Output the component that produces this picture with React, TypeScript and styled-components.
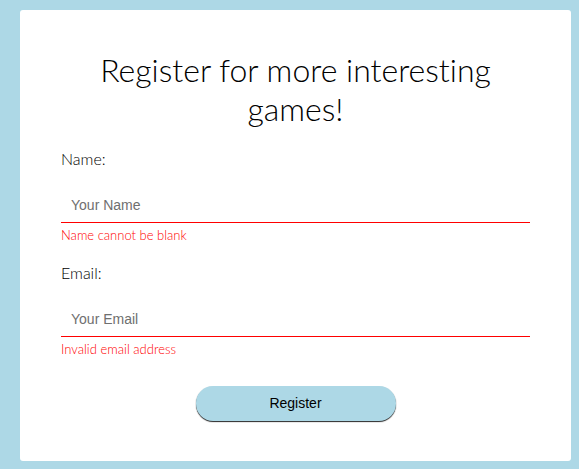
import React from "react";
import styled, { createGlobalStyle } from "styled-components";

const GlobalStyle = createGlobalStyle`
  html, body {
    margin: 0;
    padding: 0;
    background: #add8e6;
  }
  body {
    padding: 10px 8px 8px 20px;
    font-family: Lato, "Liberation Sans", sans-serif;
  }
  * { box-sizing: border-box; }
`;

const Card = styled.div`
  width: 551px;
  height: 451px;
  background: #ffffff;
  border-radius: 3px;
  padding: 40px 41px 0 41px;
  display: flex;
  flex-direction: column;
`;

const Title = styled.h1`
  margin: 0 0 21px 0;
  font-family: Lato, sans-serif;
  font-size: 32px;
  font-weight: 300;
  line-height: normal;
  text-align: center;
  color: #000;
  font-variant-ligatures: none;
`;

const Field = styled.div`
  display: flex;
  flex-direction: column;
  margin-bottom: 20px;
`;

const Label = styled.label`
  font-family: Lato, sans-serif;
  font-size: 16px;
  font-weight: 300;
  line-height: normal;
  color: #000;
  margin-bottom: 20px;
`;

const Input = styled.input<{ $invalid?: boolean }>`
  height: 35px;
  width: 100%;
  border: none;
  border-bottom: 1px solid ${(p) => (p.$invalid ? "#ff0000" : "#999")};
  padding: 0 10px;
  font-family: "Liberation Sans", Arial, sans-serif;
  font-size: 14px;
  outline: none;
  background: transparent;
  &::placeholder {
    color: #6f6f6f;
  }
`;

const ErrorText = styled.span`
  margin-top: 4px;
  font-family: Lato, sans-serif;
  font-size: 13px;
  font-weight: 300;
  line-height: normal;
  color: #ff0000;
  font-variant-ligatures: none;
`;

const ButtonRow = styled.div`
  display: flex;
  justify-content: center;
  margin-top: 9px;
`;

const Button = styled.button`
  width: 200px;
  height: 35px;
  border: none;
  border-radius: 17px;
  background: #add8e6;
  box-shadow: 0 1px 1px rgba(0, 0, 0, 0.85);
  font-family: "Liberation Sans", Arial, sans-serif;
  font-size: 14px;
  line-height: 1;
  padding: 0 0 2px 0;
  color: #000;
  cursor: pointer;
`;

export default function App() {
  return (
    <>
      <GlobalStyle />
      <Card>
        <Title>Register for more interesting games!</Title>
        <Field>
          <Label htmlFor="name">Name:</Label>
          <Input id="name" placeholder="Your Name" $invalid />
          <ErrorText>Name cannot be blank</ErrorText>
        </Field>
        <Field>
          <Label htmlFor="email">Email:</Label>
          <Input id="email" placeholder="Your Email" $invalid />
          <ErrorText>Invalid email address</ErrorText>
        </Field>
        <ButtonRow>
          <Button type="button">Register</Button>
        </ButtonRow>
      </Card>
    </>
  );
}
